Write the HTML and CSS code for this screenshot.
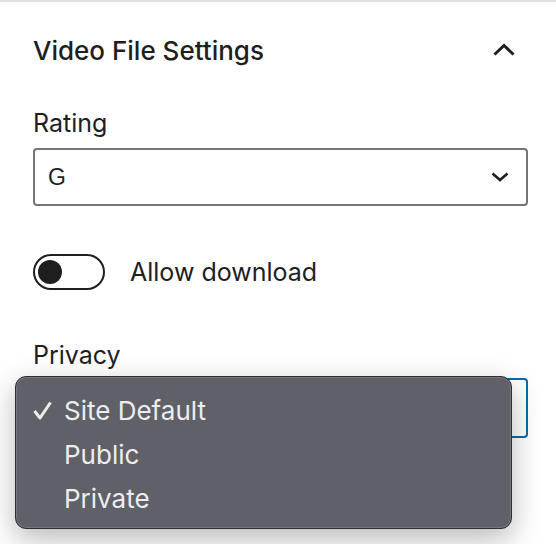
FILE: index.html
```html
<!DOCTYPE html>
<html lang="en">
<head>
<meta charset="utf-8">
<title>Video File Settings</title>
<link rel="stylesheet" href="styles.css">
</head>
<body>
<div class="panel">
  <div class="panel-header">
    <h2 class="panel-title">Video File Settings</h2>
    <svg class="chevron-up" width="22" height="13" viewBox="0 0 22 13"><path d="M1.5 11.5 L11 2.5 L20.5 11.5" fill="none" stroke="#1e1e1e" stroke-width="3"/></svg>
  </div>
  <div class="panel-body">
    <div class="field">
      <div class="field-label">Rating</div>
      <div class="select">
        <span class="select-value">G</span>
        <svg class="chevron-down" width="18" height="10" viewBox="0 0 18 10"><path d="M1.5 1.5 L9 8 L16.5 1.5" fill="none" stroke="#1e1e1e" stroke-width="2.6"/></svg>
      </div>
    </div>
    <div class="toggle-row">
      <span class="toggle"><span class="toggle-knob"></span></span>
      <span class="toggle-label">Allow download</span>
    </div>
    <div class="field field-privacy">
      <div class="field-label">Privacy</div>
      <div class="select select-focused"></div>
      <div class="menu">
        <div class="menu-item"><svg class="check" width="19" height="19" viewBox="0 0 19 19"><path d="M1.5 10 L7 17 L17.5 1.5" fill="none" stroke="#ededee" stroke-width="3" stroke-linejoin="round"/></svg>Site Default</div>
        <div class="menu-item"><span class="check"></span>Public</div>
        <div class="menu-item"><span class="check"></span>Private</div>
      </div>
    </div>
  </div>
</div>
</body>
</html>
```
FILE: styles.css
```css
html, body {
  margin: 0;
  padding: 0;
  background: #ffffff;
}
body {
  font-family: Inter, "Noto Sans", sans-serif;
  color: #1e1e1e;
  width: 556px;
  height: 544px;
  overflow: hidden;
}
.panel {
  border-top: 2px solid #e0e0e0;
}
.panel-header {
  height: 97px;
  display: flex;
  align-items: center;
  justify-content: space-between;
  padding: 0 41px 0 33px;
}
.panel-title {
  margin: 0;
  font-size: 26px;
  font-weight: 500;
}
.chevron-up {
  display: block;
  margin-top: -3px;
}
.panel-body {
  padding: 0 28px 0 33px;
}
.field-label {
  font-size: 25px;
  line-height: 32px;
}
.field {
  margin-top: 8px;
}
.select {
  margin-top: 9px;
  height: 58px;
  box-sizing: border-box;
  border: 2px solid #757575;
  border-radius: 4px;
  display: flex;
  align-items: center;
  justify-content: space-between;
  padding: 0 17px 0 13px;
}
.select-value {
  font-family: "Liberation Sans", Arial, sans-serif;
  font-size: 23px;
}
.chevron-down {
  display: block;
}
.toggle-row {
  margin-top: 48px;
  display: flex;
  align-items: center;
  gap: 25px;
}
.toggle {
  width: 72px;
  height: 36px;
  box-sizing: border-box;
  border: 2px solid #1e1e1e;
  border-radius: 18px;
  padding: 4px 3px;
  display: flex;
}
.toggle-knob {
  width: 24px;
  height: 24px;
  border-radius: 50%;
  background: #1e1e1e;
}
.toggle-label {
  font-size: 25px;
}
.field-privacy {
  margin-top: 49px;
  position: relative;
}
.select-focused {
  margin-top: 7px;
  height: 60px;
  border-color: #0a6ba4;
}
.menu {
  position: absolute;
  left: -18px;
  top: 37px;
  width: 497px;
  height: 153px;
  box-sizing: border-box;
  background: #5f6068;
  border: 1px solid #2e2e31;
  box-shadow: inset 0 0 0 1px #76777e, 0 10px 30px rgba(0,0,0,0.28);
  border-radius: 11px;
  padding-top: 11px;
  color: #ededee;
  font-size: 26px;
}
.menu-item {
  height: 44px;
  display: flex;
  align-items: center;
  padding-left: 17px;
}
.check {
  display: block;
  width: 19px;
  margin-right: 12px;
  flex: none;
}
```
